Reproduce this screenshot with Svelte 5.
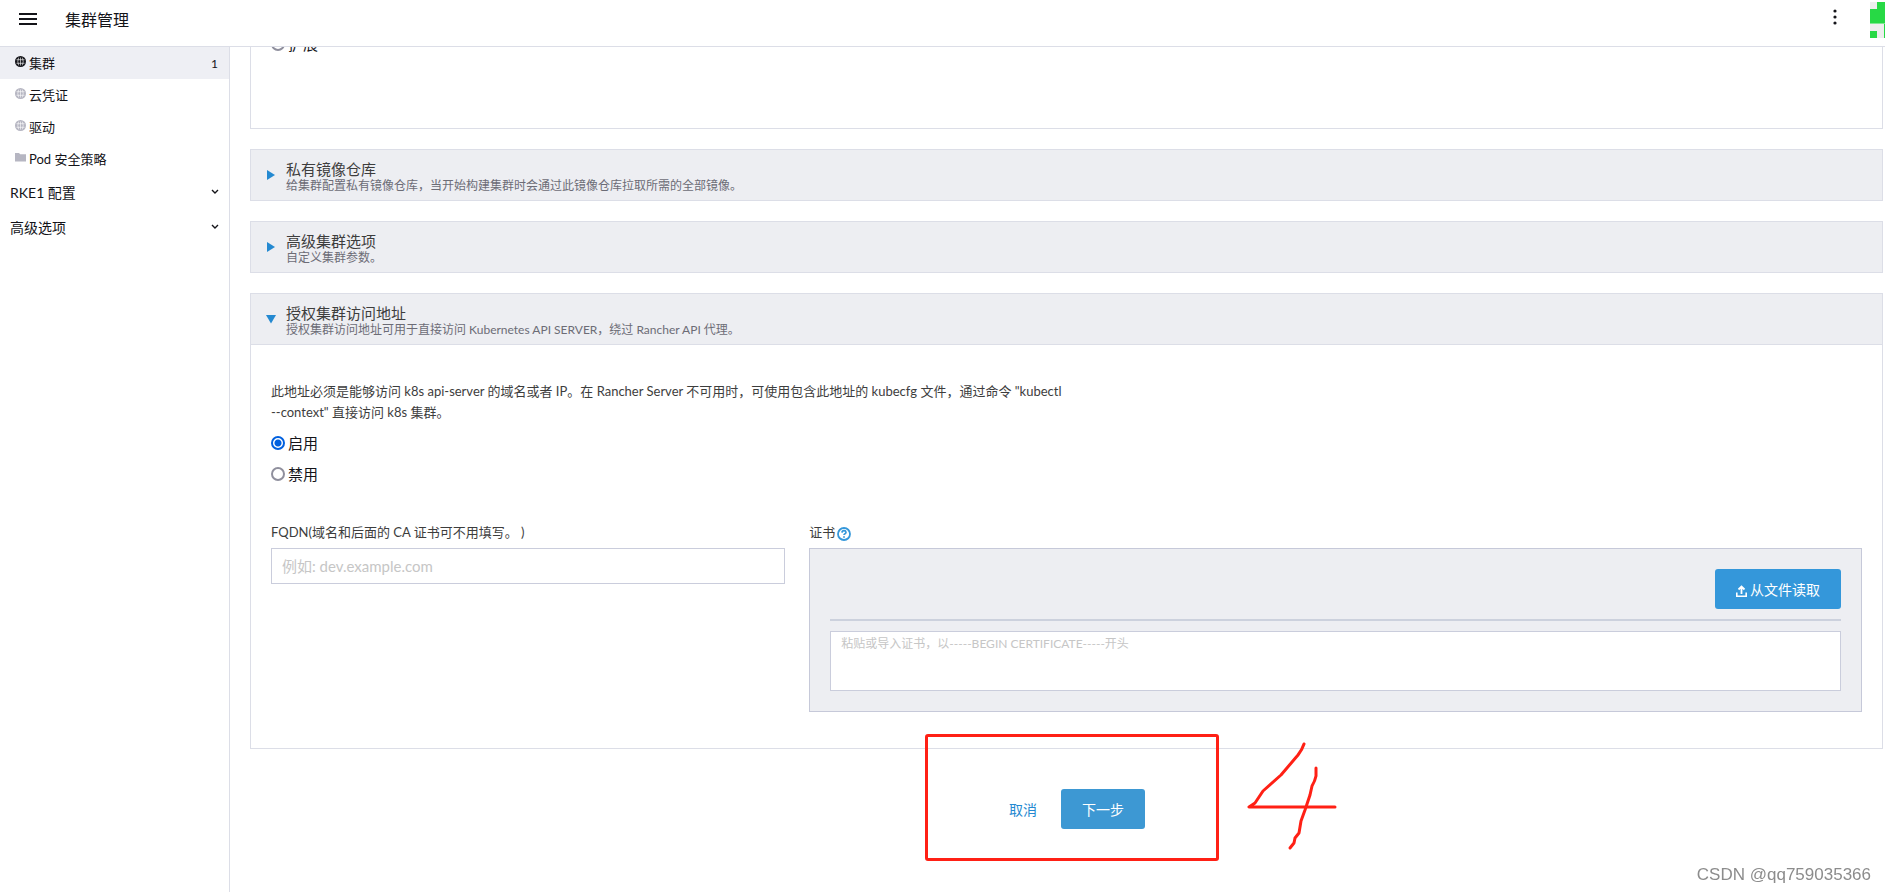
<script>
  let navItems = [
    { name: '集群', icon: 'globe', count: 1, active: true },
    { name: '云凭证', icon: 'globe' },
    { name: '驱动', icon: 'globe' },
    { name: 'Pod 安全策略', icon: 'folder' },
  ];

  let navGroups = ['RKE1 配置', '高级选项'];

  let closedSections = [
    { title: '私有镜像仓库', detail: '给集群配置私有镜像仓库，当开始构建集群时会通过此镜像仓库拉取所需的全部镜像。' },
    { title: '高级集群选项', detail: '自定义集群参数。' },
  ];

  let authEndpoint = 'enabled';
  let fqdn = '';
  let cert = '';
</script>

<div class="shell">
  <header>
    <button class="menu" aria-label="菜单">
      <svg width="18" height="12" viewBox="0 0 18 12">
        <path d="M0 1h18M0 6h18M0 11h18" stroke="#141419" stroke-width="2" />
      </svg>
    </button>
    <h1>集群管理</h1>
    <button class="more" aria-label="更多">
      <svg width="4" height="16" viewBox="0 0 4 16" fill="#141419">
        <circle cx="2" cy="2" r="1.6" />
        <circle cx="2" cy="8" r="1.6" />
        <circle cx="2" cy="14" r="1.6" />
      </svg>
    </button>
    <!-- User avatar, cut off by the window edge -->
    <svg class="avatar" width="15" height="36" viewBox="0 0 15 36">
      <path fill="#eeeeee" d="M0 0h15v36H0z" />
      <path fill="#27d945" d="M7 0h8v21H0V7h7zM0 29h7v7H0zM14 22h1v14h-1z" />
      <path fill="#7fe892" d="M0 21h15v1H0z" />
    </svg>
  </header>

  <nav>
    {#each navItems as item}
      <a href="#top" class="item" class:active={item.active}>
        {#if item.icon === 'globe'}
          <svg class="icon" width="11" height="11" viewBox="0 0 11 11">
            <circle cx="5.5" cy="5.5" r="5.5" fill="currentColor" />
            <path class="grid-lines" d="M5.5 1.500v8M1.500 3.700h8M1.500 7.300h8M3.600 1.700q-1.600 3.800 0 7.600M7.400 1.700q1.600 3.800 0 7.600" fill="none" stroke-width=".6" />
          </svg>
        {:else}
          <svg class="icon" width="11" height="11" viewBox="0 0 11 11">
            <path d="M0 1h4l1.200 1.300H11V9.500H0z" fill="currentColor" />
          </svg>
        {/if}
        <span class="name">{item.name}</span>
        {#if item.count}
          <span class="count">{item.count}</span>
        {/if}
      </a>
    {/each}
    {#each navGroups as group}
      <button class="group">
        <span>{group}</span>
        <svg width="8" height="6" viewBox="0 0 8 6">
          <path d="M1 1l3 3 3-3" fill="none" stroke="#141419" stroke-width="1.4" />
        </svg>
      </button>
    {/each}
  </nav>

  <main>
    <section class="scrolled">
      <label class="radio"><input type="radio" name="extend" />扩展</label>
    </section>

    {#each closedSections as section}
      <section>
        <button class="section-head">
          <svg width="10" height="10" viewBox="0 0 10 10"><path d="M1 0v10l8-5z" fill="#2489d1" /></svg>
          <span class="titles">
            <span class="title">{section.title}</span>
            <span class="detail">{section.detail}</span>
          </span>
        </button>
      </section>
    {/each}

    <section>
      <button class="section-head open">
        <svg width="10" height="10" viewBox="0 0 10 10"><path d="M0 1h10L5 9.500z" fill="#2489d1" /></svg>
        <span class="titles">
          <span class="title">授权集群访问地址</span>
          <span class="detail">授权集群访问地址可用于直接访问 Kubernetes API SERVER，绕过 Rancher API 代理。</span>
        </span>
      </button>
      <div class="section-body">
        <p>
          此地址必须是能够访问 k8s api-server 的域名或者 IP。在 Rancher Server 不可用时，可使用包含此地址的 kubecfg 文件，通过命令 "kubectl<br />
          --context" 直接访问 k8s 集群。
        </p>
        <label class="radio"><input type="radio" value="enabled" bind:group={authEndpoint} />启用</label>
        <label class="radio"><input type="radio" value="disabled" bind:group={authEndpoint} />禁用</label>

        <div class="fields">
          <div class="field">
            <label class="field-label" for="fqdn">FQDN(域名和后面的 CA 证书可不用填写。 )</label>
            <input id="fqdn" class="text" type="text" placeholder="例如: dev.example.com" bind:value={fqdn} />
          </div>
          <div class="field wide">
            <label class="field-label" for="cert">
              证书
              <svg width="14" height="14" viewBox="0 0 14 14" fill="none" stroke="#3497da">
                <circle cx="7" cy="7" r="6" stroke-width="1.8" />
                <path d="M5 5.600q.1-1.900 2-1.900t2 1.600q0 .9-1 1.500t-1 1.300" stroke-width="1.700" />
                <path d="M7 9.200v1.500" stroke-width="1.800" />
              </svg>
            </label>
            <div class="upload">
              <div class="upload-bar">
                <button class="btn primary">
                  <svg class="upload-icon" width="11" height="12" viewBox="0 0 11 12" fill="none" stroke="#fff">
                    <path d="M5.500 9V2M2.500 4.500l3-3 3 3" stroke-width="1.800" />
                    <path d="M.8 7.500v3.700h9.400V7.500" stroke-width="1.600" />
                  </svg>
                  从文件读取
                </button>
              </div>
              <textarea id="cert" placeholder="粘贴或导入证书，以-----BEGIN CERTIFICATE-----开头" bind:value={cert}></textarea>
            </div>
          </div>
        </div>
      </div>
    </section>

    <footer>
      <button class="btn link">取消</button>
      <button class="btn primary next">下一步</button>
      <!-- Red marker around the buttons with step number -->
      <svg class="marker" width="412" height="128" viewBox="0 0 412 128" fill="none" stroke="#ff2015" stroke-width="3" stroke-linecap="round" stroke-linejoin="round">
        <rect x="1.500" y="1.500" width="291" height="124" rx="1.500" />
        <path d="M379 10q-2 6-6 11l-17 20-18 16-8 12-6 4H410" />
        <path d="M391 34v8q-1 5-4 10l-2 9-5 15-4 11-2 12-4 5-1 5-4 5" />
      </svg>
    </footer>
  </main>

  <div class="watermark">CSDN @qq759035366</div>
</div>

<style>
  :global(body) {
    background: #fff;
    color: #141419;
    font-family: Lato, 'Noto Sans CJK SC', sans-serif;
    font-size: 14px;
  }

  .shell {
    display: grid;
    grid-template: 47px 1fr / 230px 1fr;
    box-sizing: border-box;
    height: 100vh;
    overflow: hidden;
  }

  button,
  input,
  textarea {
    box-sizing: border-box;
    font-family: inherit;
    border-radius: 0;
  }

  button {
    padding: 0;
    border: none;
    background: none;
    color: inherit;
    cursor: pointer;
  }

  svg {
    flex-shrink: 0;
  }

  header {
    grid-column: 1 / 3;
    display: flex;
    align-items: flex-start;
    border-bottom: 1px solid #dcdee7;
  }

  .menu {
    display: flex;
    padding: 13px 28px 13px 19px;
  }

  h1 {
    flex-grow: 1;
    margin: 8px 0 0;
    font-size: 16px;
    font-weight: 400;
    line-height: 24px;
  }

  .more {
    display: flex;
    padding: 9px 33px 9px 9px;
  }

  .avatar {
    margin-top: 2px;
  }

  nav {
    border-right: 1px solid #dcdee7;
  }

  .item {
    display: flex;
    align-items: center;
    gap: 3px;
    height: 32px;
    padding: 0 11px 0 15px;
    color: inherit;
    font-size: 13px;
    text-decoration: none;
  }

  .item.active {
    background: #eeeff4;
  }

  .icon {
    margin-bottom: 4px;
    color: #b6b6c2;
  }

  .active .icon {
    color: #141419;
  }

  .grid-lines {
    stroke: #fff;
  }

  .name {
    flex-grow: 1;
    padding-bottom: 2px;
  }

  .count {
    font-size: 12px;
  }

  .group {
    display: flex;
    align-items: center;
    justify-content: space-between;
    width: 100%;
    height: 35px;
    padding: 0 10px 2px;
    font-size: 14px;
  }

  main {
    min-width: 0;
    padding: 0 2px 0 20px;
    overflow: hidden;
  }

  section {
    margin-bottom: 20px;
    border: 1px solid #dcdee7;
  }

  /* Scrolled up under the header */
  .scrolled {
    margin-top: -20px;
    padding: 0 20px 69px;
  }

  .section-head {
    display: flex;
    align-items: center;
    gap: 10px;
    width: 100%;
    height: 50px;
    padding: 0 15px;
    background: #edeef2;
    text-align: left;
  }

  .section-head.open {
    border-bottom: 1px solid #dcdee7;
    height: 51px;
  }

  .titles {
    display: flex;
    flex-direction: column;
    padding-top: 4px;
  }

  .title {
    color: #3d3d3d;
    font-size: 15px;
    line-height: 18px;
  }

  .detail {
    color: #6c6c76;
    font-size: 12px;
    line-height: 16px;
  }

  .section-body {
    padding: 36px 20px;
  }

  p {
    margin: 0 0 4px;
    color: #3d3d3d;
    font-size: 13px;
    line-height: 21px;
  }

  .radio {
    display: flex;
    align-items: center;
    gap: 3px;
    height: 31px;
    font-size: 15px;
  }

  .radio input {
    width: 14px;
    height: 14px;
    margin: 0;
    appearance: none;
    border: 2px solid #8f8f9d;
    border-radius: 50%;
    background: #fff;
  }

  .radio input:checked {
    border-color: #0060df;
    background: radial-gradient(#0060df 3px, #fff 4px);
  }

  .fields {
    display: grid;
    grid-template-columns: repeat(3, 1fr);
    gap: 24px;
    margin-top: 34px;
  }

  .wide {
    grid-column: span 2;
  }

  .field-label {
    display: flex;
    align-items: flex-end;
    gap: 2px;
    height: 18px;
    margin-bottom: 7px;
    color: #3d3d3d;
    font-size: 13px;
    line-height: 18px;
  }

  .text {
    width: 100%;
    height: 36px;
    padding: 0 10px;
    border: 1px solid #cacddc;
    font-size: 15px;
  }

  .upload {
    padding: 20px;
    border: 1px solid #c6c9d9;
    background: #edeef2;
  }

  .upload-bar {
    display: flex;
    justify-content: flex-end;
    margin-bottom: 10px;
    padding-bottom: 10px;
    border-bottom: 2px solid #ccd1dd;
  }

  .upload-icon {
    margin-top: 4px;
  }

  textarea {
    display: block;
    width: 100%;
    height: 60px;
    padding: 4px 10px;
    border: 1px solid #cacddc;
    font-size: 12px;
    line-height: 16px;
    resize: none;
  }

  ::placeholder {
    color: #c6c6c6;
    opacity: 1;
  }

  .btn {
    display: flex;
    align-items: center;
    gap: 3px;
    height: 40px;
    padding: 0 21px;
    border-radius: 3px;
    font-size: 14px;
  }

  .primary {
    background: #3497da;
    color: #fff;
  }

  .next {
    background: #3d98d3;
  }

  .link {
    color: #2489d1;
  }

  footer {
    position: relative;
    display: flex;
    justify-content: center;
    gap: 3px;
    padding-top: 20px;
  }

  .marker {
    position: absolute;
    top: -35px;
    left: calc(50% - 142px);
    pointer-events: none;
  }

  .watermark {
    position: fixed;
    right: 14px;
    bottom: 7px;
    color: #8c8c8c;
    font-family: 'Liberation Sans', sans-serif;
    font-size: 17px;
    line-height: 20px;
  }
</style>
